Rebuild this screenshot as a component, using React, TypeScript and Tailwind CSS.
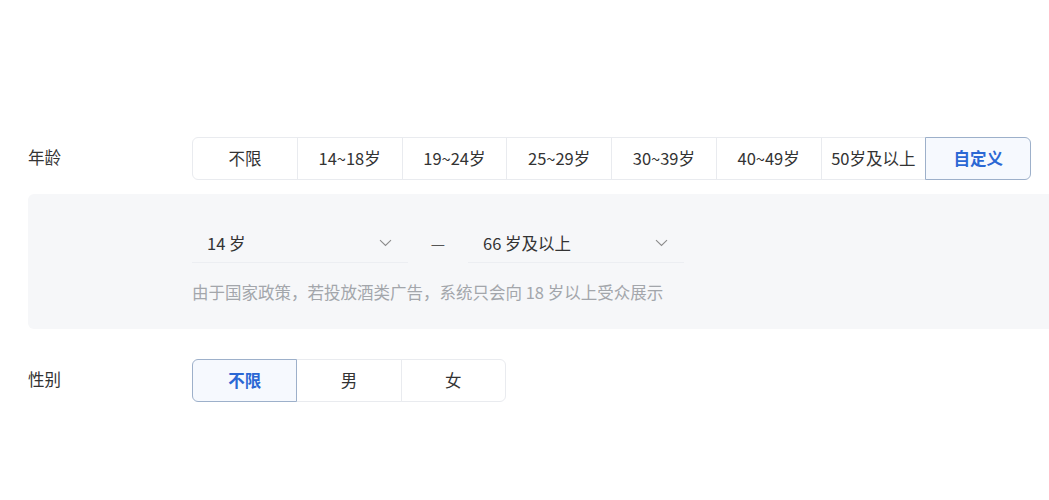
import { ChevronDown } from "lucide-react";

const AGE_OPTIONS = ["不限", "14~18岁", "19~24岁", "25~29岁", "30~39岁", "40~49岁", "50岁及以上", "自定义"];
const GENDER_OPTIONS = ["不限", "男", "女"];

const FONT = { fontFamily: '"Noto Sans CJK SC", "Liberation Sans", sans-serif' };

const Segmented = ({ options, active, width }: { options: string[]; active: number; width: string }) => (
  <div className={`flex ${width}`}>
    {options.map((opt, i) => {
      const selected = i === active;
      const first = i === 0;
      const last = i === options.length - 1;
      return (
        <div
          key={opt}
          className={`flex-1 h-[43px] flex items-center justify-center text-[16.5px] border -ml-px first:ml-0 ${
            first ? "rounded-l-[6px]" : ""
          } ${last ? "rounded-r-[6px]" : ""} ${
            selected
              ? "relative z-10 border-[#9db0ca] bg-[#f6f9fe] text-[#2b68d4] font-bold"
              : "border-[#e9ebef] bg-white text-[#333]"
          }`}
        >
          {opt}
        </div>
      );
    })}
  </div>
);

const Select = ({ value }: { value: string }) => (
  <div className="w-[216px] h-[40px] flex items-center justify-between pl-[15px] pr-[16px] border-b border-[#eceef2] text-[16.5px] text-[#333]">
    <span className="mt-[1px]">{value}</span>
    <svg width="13" height="8" viewBox="0 0 13 8" fill="none" className="mt-[1px]">
      <path d="M1 1.2 6.5 6.5 12 1.2" stroke="#8c8c8c" strokeWidth="1.1" />
    </svg>
  </div>
);

export default function App() {
  return (
    <div className="w-[1049px] h-[500px] bg-white overflow-hidden pt-[137px] pl-[28px]" style={FONT}>
      {/* 年龄 */}
      <div className="flex items-center">
        <div className="w-[164px] text-[16.5px] text-[#333] -mt-[3px]">年龄</div>
        <Segmented options={AGE_OPTIONS} active={7} width="w-[839px]" />
      </div>

      <div className="mt-[14px] w-[1040px] h-[135px] bg-[#f6f7f9] rounded-l-[6px] pl-[164px] pt-[29px]">
        <div className="flex items-center">
          <Select value="14 岁" />
          <span className="w-[60px] text-center text-[#555] text-[16px]">—</span>
          <Select value="66 岁及以上" />
        </div>
        <div className="mt-[17px] text-[16.5px] text-[#a3a6ab]">
          由于国家政策，若投放酒类广告，系统只会向 18 岁以上受众展示
        </div>
      </div>

      {/* 性别 */}
      <div className="mt-[30px] flex items-center">
        <div className="w-[164px] text-[16.5px] text-[#333] -mt-[3px]">性别</div>
        <Segmented options={GENDER_OPTIONS} active={0} width="w-[314px]" />
      </div>
    </div>
  );
}
